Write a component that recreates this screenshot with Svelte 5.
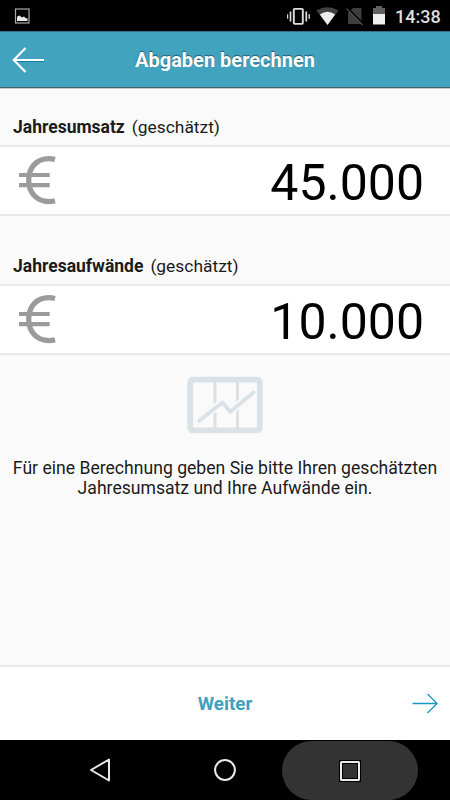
<script>
  const fields = [
    { name: 'Jahresumsatz', value: '45.000' },
    { name: 'Jahresaufwände', value: '10.000' }
  ];
</script>

<div class="screen">
  <div class="status">
    <svg class="picture" width="16" height="16" viewBox="0 0 16 16">
      <rect x="1.500" y="1" width="13.500" height="14" fill="none" stroke="#aaa" stroke-width="1.200" />
      <path d="M3 13V9l1-1L5.500 7.500 8 9.500l2-1 1.500 1.500 2 .5v2.500z" fill="#e8e8e8" />
    </svg>
    <div class="indicators">
      <svg width="98" height="22" viewBox="0 0 98 22">
        <g fill="none" stroke="#dedede" transform="translate(-2)">
          <rect x="8.800" y="3.900" width="9" height="15" rx=".8" stroke-width="1.900" />
          <path d="M5.500 6.500v10M21.300 6.500v10" stroke-width="1.700" />
          <path d="M2.500 9.300v4.400M24.200 9.300v4.400" stroke-width="1.400" />
        </g>
        <path d="M29.500 5.500Q40.500 -1 51.500 5.500L40.500 20Z" fill="#414141" />
        <path d="M32.800 9.500Q40.500 4 48.200 9.500L40.500 20Z" fill="#ededed" />
        <path d="M66 3H73.500Q74.500 3 74.500 4V19H61V8Z" fill="#3e3e3e" />
        <path d="M60 2.500 76 19" stroke="#000" stroke-width="2" />
        <path d="M59.500 3.500 75.500 20" stroke="#4b4b4b" stroke-width="1.300" />
        <path d="M86 3h3V1h6v2h3v7H86z" fill="#606060" />
        <path d="M86 9h12v10.500H86z" fill="#efefef" />
      </svg>
      <span class="clock">14:38</span>
    </div>
  </div>

  <header>
    <svg class="back" width="36" height="30" viewBox="0 0 36 30" fill="none">
      <path d="M6 16.500H33" stroke="#087d9b" stroke-width="1" />
      <path d="M14.500 3 2.800 15 14.500 27M2.500 15H33" stroke="#fff" stroke-width="2.200" />
    </svg>
    <h1>Abgaben berechnen</h1>
  </header>

  <main>
    {#each fields as field}
      <section>
        <div class="label"><b>{field.name}</b><span>(geschätzt)</span></div>
        <div class="amount">
          <svg class="euro" width="38" height="50" viewBox="0 0 38 50" fill="none" stroke="#9b9b9b">
            <path d="M37 4.500C35 4 33.500 3.700 31 3.700C18.500 3.700 10.700 12.500 10.700 25.100S18.500 46.600 31 46.600C33.500 46.600 35 46.300 37 45.800" stroke-width="5.300" />
            <path d="M1 20H31.700M1 30.200H31.700" stroke-width="4.200" />
          </svg>
          <strong>{field.value}</strong>
        </div>
      </section>
    {/each}
    <div class="hint">
      <svg width="76" height="58" viewBox="0 0 76 58" fill="none">
        <rect x="3.200" y="3.700" width="69.600" height="50.600" rx="2.500" stroke="#dae2e7" stroke-width="5.800" />
        <path d="M28 5V53M50.500 5V53" stroke="#dae2e7" stroke-width="3" />
        <path d="M12.300 44.700 35.300 26.500 43.300 35.700 66.500 16.500" stroke="#fafafa" stroke-width="7.500" stroke-linecap="round" />
        <path d="M12.300 44.700 35.300 26.500 43.300 35.700 66.500 16.500" stroke="#dae2e7" stroke-width="4" stroke-linecap="round" stroke-linejoin="round" />
      </svg>
      <p>Für eine Berechnung geben Sie bitte Ihren geschätzten<br />Jahresumsatz und Ihre Aufwände ein.</p>
    </div>
  </main>

  <footer>
    <span></span>
    <b>Weiter</b>
    <svg width="28" height="22" viewBox="0 0 28 22" fill="none" stroke="#159bbb" stroke-width="1.300">
      <path d="M1.500 10.500H26M16.500 1 26 10.500 16.500 20" />
    </svg>
  </footer>

  <nav>
    <div class="key">
      <svg width="24" height="26" viewBox="0 0 24 26"><path d="M21 2.500V23.500L3 13Z" fill="none" stroke="#e9e9e9" stroke-width="2" stroke-linejoin="round" /></svg>
    </div>
    <div class="key">
      <svg width="24" height="24" viewBox="0 0 24 24"><circle cx="12" cy="12" r="9.900" fill="none" stroke="#e9e9e9" stroke-width="2" /></svg>
    </div>
    <div class="key">
      <div class="pressed">
        <svg width="24" height="24" viewBox="0 0 24 24" fill="none">
          <rect x="3" y="3" width="18" height="18" stroke="#000" stroke-width="4" />
          <rect x="3" y="3" width="18" height="18" rx=".5" stroke="#ececec" stroke-width="2" />
        </svg>
      </div>
    </div>
  </nav>
</div>

<style>
  :global(body) { margin: 0; }
  .screen {
    width: 450px;
    height: 800px;
    display: flex;
    flex-direction: column;
    overflow: hidden;
    background: #fafafa;
    color: #1b1b1b;
    font-family: Roboto, sans-serif;
  }
  svg { display: block; flex: none; }
  .status {
    height: 31px;
    flex: none;
    box-sizing: border-box;
    padding: 0 10px 0 14px;
    display: flex;
    justify-content: space-between;
    background: #000;
  }
  .picture { margin-top: 8px; }
  .indicators { display: flex; padding-top: 5px; gap: 10px; }
  .clock {
    color: #dedede;
    font-size: 18px;
    line-height: 22px;
    padding-top: 1px;
    font-weight: 500;
    width: 45px;
    white-space: nowrap;
  }
  header {
    height: 57px;
    flex: none;
    box-sizing: border-box;
    display: grid;
    grid-template-columns: 60px 1fr 60px;
    align-items: center;
    background: #42a3bf;
    border-top: 1px solid #2f7488;
    border-bottom: 1px solid #4b616a;
    box-shadow: 0 1px 0 #c6c9ca;
  }
  .back { margin: 0 0 0 11px; }
  h1 {
    margin: 1px 0 0;
    text-align: center;
    color: #fff;
    font-size: 20px;
    line-height: 24px;
    font-weight: 700;
    text-shadow: 0 -1px 1px #24596a;
    white-space: nowrap;
  }
  main { flex: 1; }
  .label {
    height: 57px;
    box-sizing: border-box;
    padding: 29px 13px 0;
    display: flex;
    gap: 7px;
    font-size: 17.500px;
    line-height: 21px;
  }
  .label span { font-size: 17.400px; }
  section + section .label { height: 68px; padding-top: 40px; }
  .amount {
    height: 71px;
    box-sizing: border-box;
    border-top: 2px solid #e9e9e9;
    border-bottom: 2px solid #e9e9e9;
    background: #fff;
    padding: 0 26px 0 18px;
    display: flex;
    justify-content: space-between;
    align-items: center;
  }
  .euro { margin-top: -1px; }
  strong { color: #000; font-weight: 400; font-size: 50px; line-height: 60px; padding-top: 5px; }
  .hint { display: flex; flex-direction: column; align-items: center; padding-top: 21px; }
  p {
    margin: 24px 0 0;
    font-size: 17.600px;
    line-height: 20px;
    text-align: center;
    white-space: nowrap;
  }
  footer {
    height: 75px;
    flex: none;
    box-sizing: border-box;
    border-top: 2px solid #e9e9e9;
    background: #fff;
    color: #3da2bd;
    padding: 1px 11px 0 10px;
    display: grid;
    grid-template-columns: 29px 1fr 28px;
    align-items: center;
    text-align: center;
  }
  footer b { font-size: 18.800px; line-height: 24px; }
  nav {
    height: 60px;
    flex: none;
    box-sizing: border-box;
    padding: 0 38px 0 37px;
    display: grid;
    grid-template-columns: repeat(3, minmax(0, 1fr));
    background: #000;
  }
  .key { display: flex; align-items: center; justify-content: center; }
  .pressed {
    flex: none;
    width: 136px;
    height: 59px;
    margin-top: 1px;
    border-radius: 30px;
    background: #333;
    display: flex;
    align-items: center;
    justify-content: center;
  }
</style>
